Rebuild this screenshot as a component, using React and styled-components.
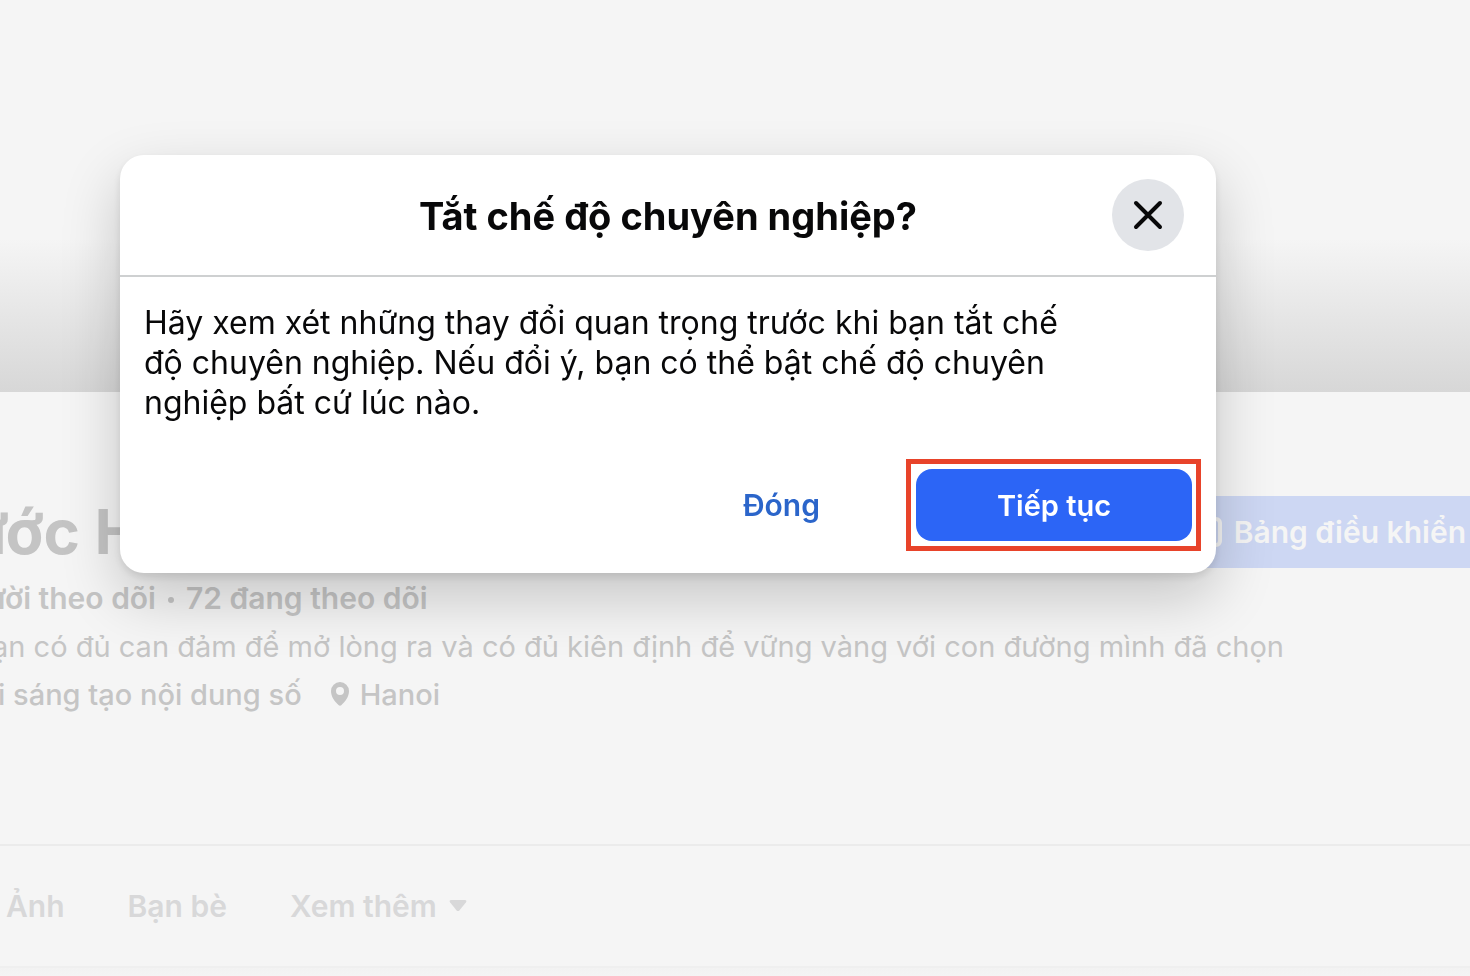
import React from "react";
import styled, { createGlobalStyle } from "styled-components";

const GlobalStyle = createGlobalStyle`
  *, *::before, *::after { box-sizing: border-box; }
  body {
    margin: 0;
    background: #f5f5f5;
    color: #080809;
    font-family: Inter, "Noto Sans", sans-serif;
    overflow: hidden;
  }
  h1, h2, p { margin: 0; padding: 0; }
  button { font: inherit; border: 0; cursor: pointer; }
`;

const Page = styled.div`
  min-height: 100vh;
  overflow: hidden;
`;

const Cover = styled.div`
  height: 392px;
  background: linear-gradient(to bottom, #f5f5f5 61%, #d7d7d7 100%);
`;

const Profile = styled.main`
  min-height: 452px;
  padding-top: 104px;
`;

const NameRow = styled.div`
  display: flex;
  justify-content: space-between;
  height: 72px;
`;

const Name = styled.h1`
  margin-left: -32px;
  font-size: 62px;
  line-height: 72px;
  font-weight: 700;
  color: #c4c4c4;
  white-space: nowrap;
`;

const DashboardButton = styled.button`
  display: flex;
  align-items: center;
  gap: 12px;
  height: 72px;
  padding: 0 4px 0 24px;
  background: #cdd7f3;
  color: #f5f5f5;
  font-size: 30px;
  font-weight: 600;
  white-space: nowrap;
`;

const Details = styled.div`
  padding-top: 6px;
`;

const Line = styled.p`
  display: flex;
  align-items: center;
  height: 48px;
  margin-left: ${(p) => p.$cut}px;
  font-size: ${(p) => (p.$strong ? 30 : 29)}px;
  font-weight: ${(p) => p.$weight};
  color: #c5c5c5;
  white-space: pre;
`;

const Dot = styled.span`
  width: 6px;
  height: 6px;
  margin: 4px 12px 0;
  border-radius: 50%;
  background: #c5c5c5;
`;

const Place = styled.span`
  display: flex;
  align-items: center;
  gap: 10px;
  margin-left: 28px;
`;

const Tabs = styled.nav`
  display: flex;
  align-items: center;
  gap: 63px;
  height: 124px;
  padding-left: 6px;
  border-top: 2px solid #ebebeb;
  border-bottom: 2px solid #efefef;
`;

const Tab = styled.a`
  display: flex;
  align-items: center;
  gap: 12px;
  font-size: 30px;
  font-weight: 600;
  color: #d8d8d9;
  text-decoration: none;
  white-space: nowrap;
`;

const Footer = styled.div`
  height: 8px;
  background: linear-gradient(to bottom, #f2f2f2, #f4f4f4);
`;

const Overlay = styled.div`
  position: fixed;
  inset: 0;
  padding: 155px 120px 0;
`;

const Dialog = styled.section`
  max-width: 1096px;
  border-radius: 24px;
  background: #fff;
  box-shadow: 0 24px 60px rgba(0, 0, 0, 0.2), 0 4px 8px rgba(0, 0, 0, 0.1);
`;

const Header = styled.header`
  display: grid;
  grid-template-columns: 72px 1fr 72px;
  align-items: center;
  height: 122px;
  padding: 0 32px;
  border-bottom: 2px solid #ced0d1;
`;

const Title = styled.h2`
  grid-column: 2;
  padding-top: 2px;
  text-align: center;
  font-size: 38px;
  line-height: 48px;
  font-weight: 700;
`;

const CloseButton = styled.button`
  display: grid;
  place-items: center;
  width: 72px;
  height: 72px;
  padding: 0;
  border-radius: 50%;
  background: #e2e4e8;
  color: #080809;
`;

const Message = styled.p`
  max-width: 980px;
  padding: 26px 24px 0;
  font-size: 32px;
  line-height: 40px;
`;

const Actions = styled.footer`
  display: flex;
  justify-content: flex-end;
  align-items: center;
  gap: 62px;
  padding: 36px 15px 22px;
`;

const TextButton = styled.button`
  height: 72px;
  padding: 0 24px;
  background: none;
  color: #2b65ca;
  font-size: 30px;
  font-weight: 600;
`;

const Highlight = styled.div`
  padding: 5px 4px 5px 5px;
  border: 5px solid #e8432a;
`;

const PrimaryButton = styled.button`
  display: block;
  width: 276px;
  height: 72px;
  border-radius: 16px;
  background: #2c65f6;
  color: #fff;
  font-size: 29px;
  font-weight: 600;
`;

function CloseIcon() {
  return (
    <svg width="32" height="32" viewBox="0 0 32 32" fill="none" stroke="currentColor" strokeWidth="4" strokeLinecap="round" aria-hidden="true">
      <path d="M4 4l24 24M28 4L4 28" />
    </svg>
  );
}

function PinIcon() {
  return (
    <svg width="20" height="26" viewBox="0 0 20 26" fill="#c5c5c5" aria-hidden="true">
      <path fillRule="evenodd" d="M10 1a9 9 0 0 1 9 9c0 5.500-3.500 10.500-7.500 14a2.200 2.200 0 0 1-3 0C4.500 20.500 1 15.500 1 10a9 9 0 0 1 9-9zm0 5a4 4 0 1 0 0 8 4 4 0 0 0 0-8z" />
    </svg>
  );
}

function CaretIcon() {
  return (
    <svg width="18" height="12" viewBox="0 0 18 12" fill="#d8d8d9" aria-hidden="true">
      <path d="M2 0h14c1.300 0 1.800 1.200 1 2.200l-6.600 8.200c-.8.900-2 .9-2.800 0L1 2.200C.2 1.200.7 0 2 0z" />
    </svg>
  );
}

function PanelIcon() {
  return (
    <svg width="28" height="30" viewBox="0 0 28 30" fill="none" stroke="#f5f5f5" strokeWidth="4" aria-hidden="true">
      <rect x="2" y="2" width="24" height="26" rx="4" />
    </svg>
  );
}

export default function App() {
  return (
    <>
      <GlobalStyle />
      <Page>
        <Cover />
        <Profile>
          <NameRow>
            <Name>ước H</Name>
            <DashboardButton type="button">
              <PanelIcon />
              Bảng điều khiển
            </DashboardButton>
          </NameRow>
          <Details>
            <Line $cut={-13} $weight={600} $strong>
              ười theo dõi
              <Dot />
              72 đang theo dõi
            </Line>
            <Line $cut={-8} $weight={400}>ạn có đủ can đảm để mở lòng ra và có đủ kiên định để vững vàng với con đường mình đã chọn</Line>
            <Line $cut={-2} $weight={500}>
              i sáng tạo nội dung số
              <Place>
                <PinIcon />
                Hanoi
              </Place>
            </Line>
          </Details>
        </Profile>
        <Tabs>
          <Tab href="#photos">Ảnh</Tab>
          <Tab href="#friends">Bạn bè</Tab>
          <Tab href="#more">
            Xem thêm
            <CaretIcon />
          </Tab>
        </Tabs>
        <Footer />
      </Page>
      <Overlay>
        <Dialog role="dialog" aria-modal="true" aria-labelledby="dialog-title">
          <Header>
            <Title id="dialog-title">Tắt chế độ chuyên nghiệp?</Title>
            <CloseButton type="button" aria-label="Đóng">
              <CloseIcon />
            </CloseButton>
          </Header>
          <Message>
            Hãy xem xét những thay đổi quan trọng trước khi bạn tắt chế độ chuyên nghiệp. Nếu đổi ý, bạn có thể bật chế độ chuyên nghiệp bất cứ lúc nào.
          </Message>
          <Actions>
            <TextButton type="button">Đóng</TextButton>
            <Highlight>
              <PrimaryButton type="button">Tiếp tục</PrimaryButton>
            </Highlight>
          </Actions>
        </Dialog>
      </Overlay>
    </>
  );
}
